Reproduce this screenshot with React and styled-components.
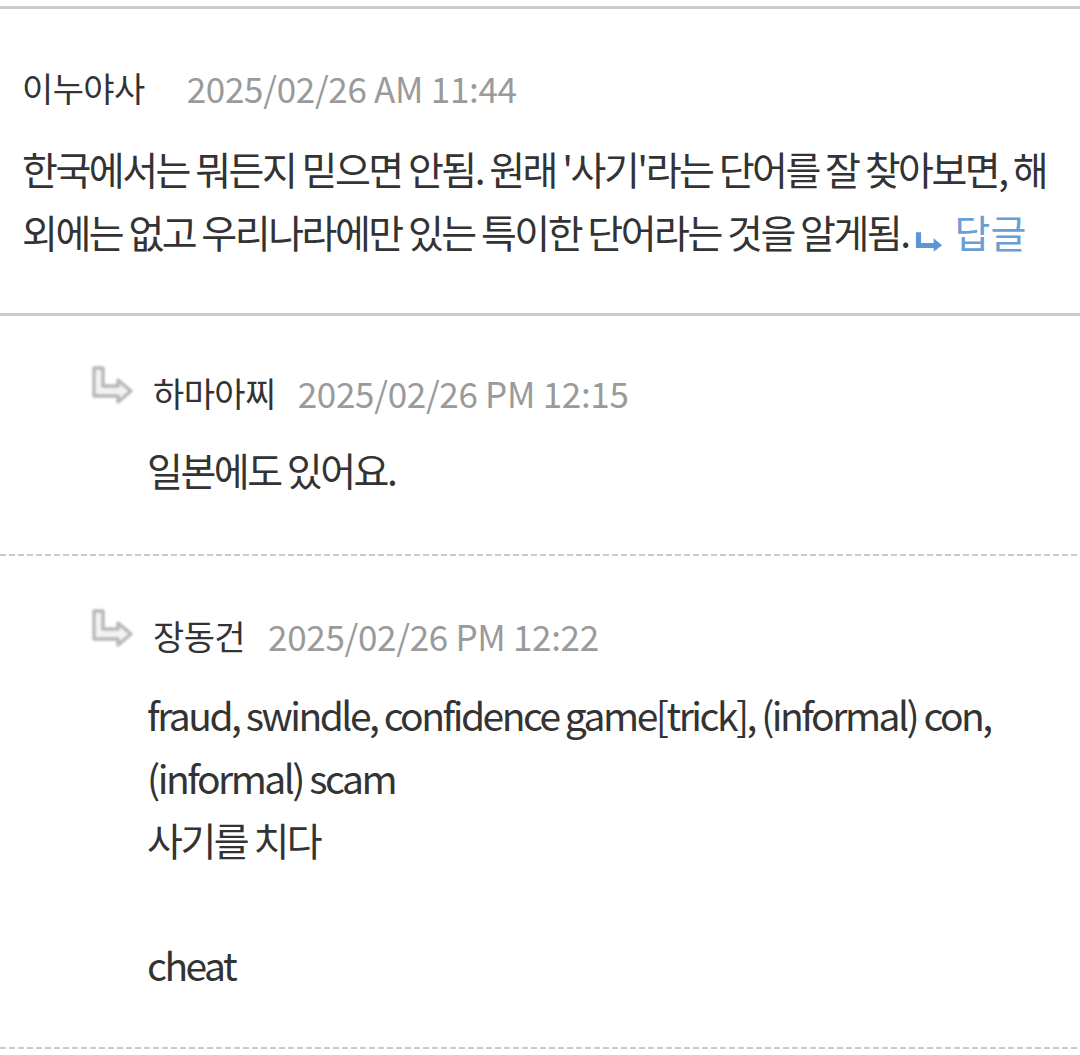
import React from "react";
import styled, { createGlobalStyle } from "styled-components";

const GlobalStyle = createGlobalStyle`
  body {
    margin: 0;
    background: #fff;
    font-family: "Noto Sans CJK KR", "Noto Sans", sans-serif;
    color: #333;
  }
`;

const Page = styled.div`
  width: 1080px;
  padding-top: 6px;
`;

const Thread = styled.div`
  border-top: 3px solid #cbcbcb;
`;

const Comment = styled.div`
  padding: 58px 22px 51px 22px;
  border-bottom: 3px solid #cbcbcb;
`;

const Reply = styled.div`
  display: flex;
  padding: ${(p) => p.$top}px 22px ${(p) => p.$bottom}px 90px;
  background-image: repeating-linear-gradient(
    to right,
    #cbcbcb 0 6px,
    transparent 6px 9px
  );
  background-size: 100% 2px;
  background-repeat: no-repeat;
  background-position: bottom left;
`;

const ReplyBody = styled.div`
  flex: 1;
`;

const Header = styled.div`
  display: flex;
  align-items: center;
  height: 40px;
  gap: ${(p) => p.$gap}px;
  margin-left: ${(p) => p.$indent || 0}px;
`;

const Name = styled.span`
  font-size: 34px;
  color: #333;
  letter-spacing: -0.6px;
`;

const Date = styled.span`
  font-size: 35px;
  color: #9a9a9a;
  letter-spacing: -0.3px;
`;

const Text = styled.div`
  margin-top: ${(p) => p.$gap}px;
  margin-left: ${(p) => p.$indent || 0}px;
  font-size: 39px;
  line-height: 62.5px;
  letter-spacing: -2.5px;
  color: #333;
  word-break: break-all;
`;

const Line = styled.div`
  min-height: 62.5px;
`;

const ReplyLink = styled.span`
  margin-left: 6px;
  color: #6a9fd6;
  letter-spacing: 0;
  white-space: nowrap;
`;

const ReplyIcon = styled.svg`
  flex: none;
  width: 44px;
  height: 40px;
  margin-top: -7px;
  filter: blur(0.8px);
`;

const ArrowSmall = styled.svg`
  display: inline-block;
  width: 28px;
  height: 21px;
  margin-right: 12px;
  vertical-align: -4px;
  filter: blur(0.6px);
`;

const ReplyArrow = () => (
  <ReplyIcon viewBox="0 0 44 40">
    <path
      d="M4 3 H13 V21 H28 V15 L41 26 L28 37 V31 H4 Z"
      fill="#f2f2f2"
      stroke="#b8b8b8"
      strokeWidth="3.4"
      strokeLinejoin="round"
    />
  </ReplyIcon>
);

const BlueArrow = () => (
  <ArrowSmall viewBox="0 0 30 22">
    <path d="M1 1 H6.5 V12.5 H20 V7.5 L29 15 L20 22 V18 H1 Z" fill="#5b97d8" />
  </ArrowSmall>
);

export default function App() {
  return (
    <Page>
      <GlobalStyle />
      <Thread>
        <Comment>
          <Header $gap={42}>
            <Name>이누야사</Name>
            <Date>2025/02/26 AM 11:44</Date>
          </Header>
          <Text $gap={30}>
            한국에서는 뭐든지 믿으면 안됨. 원래 '사기'라는 단어를 잘 찾아보면, 해외에는 없고 우리나라에만 있는 특이한 단어라는 것을 알게됨.
            <ReplyLink>
              <BlueArrow />
              답글
            </ReplyLink>
          </Text>
        </Comment>

        <Reply $top={56} $bottom={55.5}>
          <ReplyArrow />
          <ReplyBody>
            <Header $gap={22} $indent={19}>
              <Name>하마아찌</Name>
              <Date>2025/02/26 PM 12:15</Date>
            </Header>
            <Text $gap={26} $indent={13}>일본에도 있어요.</Text>
          </ReplyBody>
        </Reply>

        <Reply $top={59} $bottom={53.5}>
          <ReplyArrow />
          <ReplyBody>
            <Header $gap={23} $indent={19}>
              <Name>장동건</Name>
              <Date>2025/02/26 PM 12:22</Date>
            </Header>
            <Text $gap={28} $indent={13}>
              <Line>fraud, swindle, confidence game[trick], (informal) con,</Line>
              <Line>(informal) scam</Line>
              <Line>사기를 치다</Line>
              <Line />
              <Line>cheat</Line>
            </Text>
          </ReplyBody>
        </Reply>
      </Thread>
    </Page>
  );
}
